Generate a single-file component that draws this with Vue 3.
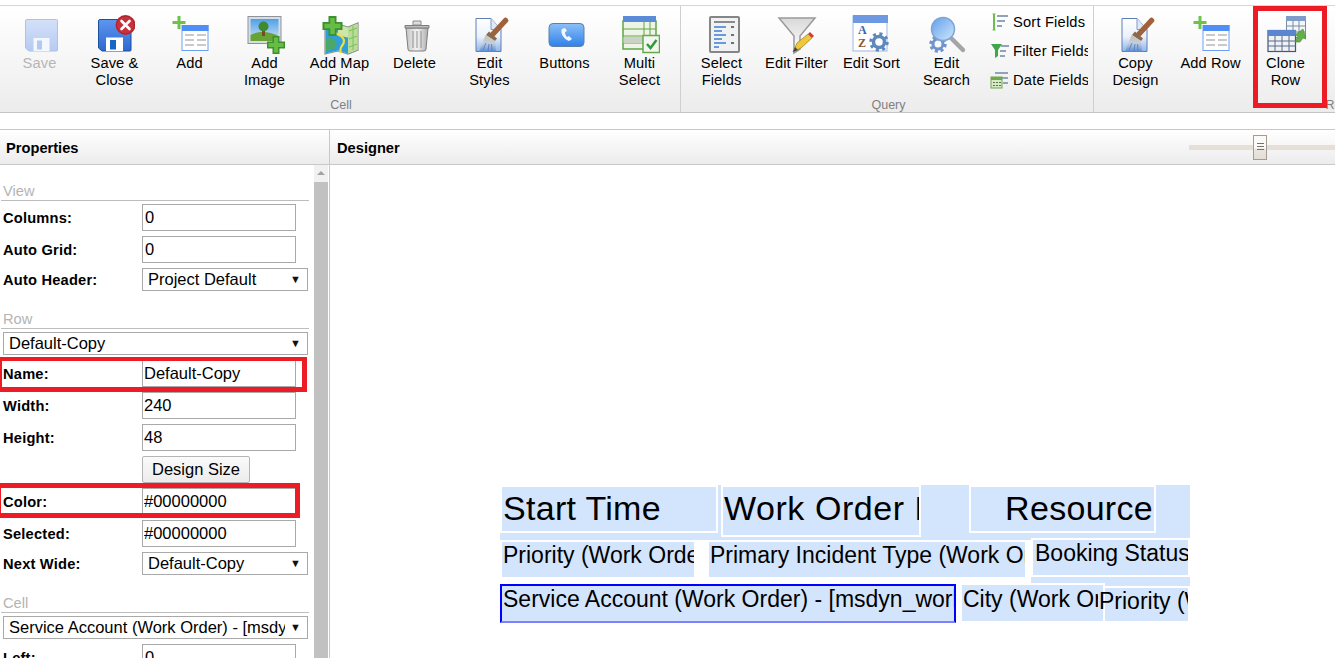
<script setup>
const cellButtons = [
  { icon: 'i-save', label: ['Save'], off: true },
  { icon: 'i-saveclose', label: ['Save &', 'Close'] },
  { icon: 'i-add', label: ['Add'] },
  { icon: 'i-image', label: ['Add', 'Image'] },
  { icon: 'i-map', label: ['Add Map', 'Pin'] },
  { icon: 'i-delete', label: ['Delete'] },
  { icon: 'i-brush', label: ['Edit', 'Styles'] },
  { icon: 'i-buttons', label: ['Buttons'] },
  { icon: 'i-multi', label: ['Multi', 'Select'] }
]
const queryButtons = [
  { icon: 'i-select', label: ['Select', 'Fields'] },
  { icon: 'i-filter', label: ['Edit Filter'] },
  { icon: 'i-sort', label: ['Edit Sort'] },
  { icon: 'i-search', label: ['Edit', 'Search'] }
]
const smallButtons = [
  { icon: 's-sort', label: 'Sort Fields' },
  { icon: 's-filter', label: 'Filter Fields' },
  { icon: 's-date', label: 'Date Fields' }
]
const rowButtons = [
  { icon: 'i-brush', label: ['Copy', 'Design'] },
  { icon: 'i-add', label: ['Add Row'] },
  { icon: 'i-clone', label: ['Clone', 'Row'] }
]

const box = (x, y, w, h) => ({ left: x - 330 + 'px', top: y - 165 + 'px', width: w + 'px', height: h + 'px' })
const strips = [box(500, 485, 690, 55), box(1031, 577, 159, 9)]
const cells = [
  { text: 'Start Time', pos: box(500, 485, 218, 48), cls: 'big' },
  { text: 'Work Order Number', pos: box(721, 485, 200, 52), cls: 'big spaced' },
  { text: 'Resource', pos: box(969, 485, 187, 48), cls: 'big end' },
  { text: 'Priority (Work Order)', pos: box(500, 540, 196, 39), cls: '' },
  { text: 'Primary Incident Type (Work Order)', pos: box(707, 540, 320, 39), cls: '' },
  { text: 'Booking Status (Work Order)', pos: box(1031, 538, 159, 39), cls: 'raised' },
  { text: 'Service Account (Work Order) - [msdyn_workorder]', pos: box(500, 584, 456, 39), cls: 'active' },
  { text: 'City (Work Order)', pos: box(960, 583, 145, 40), cls: 'lowered' },
  { text: 'Priority (Work Order)', pos: box(1098, 588, 92, 35), cls: 'shifted' }
]
</script>

<template>
  <div class="page">
    <svg class="defs" width="0" height="0" aria-hidden="true">
      <defs>
        <linearGradient id="g-pale" x1="0" y1="0" x2="0" y2="1"><stop offset="0" stop-color="#d3e0f8"/><stop offset="1" stop-color="#b6cbf2"/></linearGradient>
        <linearGradient id="g-blue" x1="0" y1="0" x2="0" y2="1"><stop offset="0" stop-color="#5f96ee"/><stop offset="1" stop-color="#2c68cf"/></linearGradient>
        <linearGradient id="g-btn" x1="0" y1="0" x2="0" y2="1"><stop offset="0" stop-color="#8cc0f7"/><stop offset="1" stop-color="#2f80ea"/></linearGradient>
        <linearGradient id="g-page" x1="0" y1="0" x2="0" y2="1"><stop offset="0" stop-color="#ffffff"/><stop offset=".55" stop-color="#eaf1fb"/><stop offset="1" stop-color="#8fb4ea"/></linearGradient>
        <linearGradient id="g-can" x1="0" y1="0" x2="1" y2="0"><stop offset="0" stop-color="#c4c4c4"/><stop offset=".5" stop-color="#f3f3f3"/><stop offset="1" stop-color="#adadad"/></linearGradient>
        <linearGradient id="g-sky" x1="0" y1="0" x2="0" y2="1"><stop offset="0" stop-color="#4f9fe8"/><stop offset="1" stop-color="#cfe6f7"/></linearGradient>
        <linearGradient id="g-lens" x1="0" y1="0" x2="1" y2="1"><stop offset="0" stop-color="#5fa0ea"/><stop offset="1" stop-color="#d2e7fb"/></linearGradient>
        <linearGradient id="g-funnel" x1="0" y1="0" x2="0" y2="1"><stop offset="0" stop-color="#d9d9d9"/><stop offset="1" stop-color="#ffffff"/></linearGradient>
        <linearGradient id="g-bristle" x1="0" y1="0" x2="0" y2="1"><stop offset="0" stop-color="#c8c0b4"/><stop offset=".5" stop-color="#c4cfdb"/><stop offset="1" stop-color="#5c8fdb"/></linearGradient>

        <symbol id="i-save" viewBox="0 0 40 40">
          <path d="M7 4.500h29.500a1 1 0 0 1 1 1V35a1 1 0 0 1-1 1H9l-3.500-3V6a1.500 1.500 0 0 1 1.500-1.500z" fill="url(#g-pale)" stroke="#aac2ee"/>
          <rect x="13.500" y="23" width="16" height="13" fill="#f4f7fd"/>
          <rect x="17" y="25.500" width="5" height="9" fill="#b3c9ef"/>
        </symbol>

        <symbol id="i-saveclose" viewBox="0 0 40 40">
          <path d="M5 4.500h30a1 1 0 0 1 1 1V35a1 1 0 0 1-1 1H7l-3.500-3V6a1.500 1.500 0 0 1 1.500-1.500z" fill="url(#g-blue)" stroke="#1d4f9f"/>
          <rect x="11" y="22.500" width="17" height="13.500" fill="#fff"/>
          <rect x="15" y="25" width="6" height="9.500" fill="#1767c4"/>
          <circle cx="30.500" cy="10" r="10" fill="#c6323b"/>
          <circle cx="30.500" cy="10" r="9" fill="none" stroke="#a5242c"/>
          <path d="M26.500 6l8 8M34.500 6l-8 8" stroke="#fff" stroke-width="2.600" stroke-linecap="round"/>
        </symbol>

        <symbol id="i-add" viewBox="0 0 40 40">
          <path d="M9 1v13M2.500 7.500h13" stroke="#6cc24a" stroke-width="3"/>
          <rect x="12" y="10.500" width="26" height="25" fill="#fff" stroke="#6f9ff0"/>
          <rect x="12" y="10" width="26.500" height="6" fill="#4f8ff5"/>
          <path d="M15 20h9M27 20h9M15 25h9M27 25h9M15 30h9M27 30h9" stroke="#c9c9c9" stroke-width="2"/>
        </symbol>

        <symbol id="i-image" viewBox="0 0 40 40">
          <rect x="3" y="1.500" width="33" height="27" fill="#d8dde3" stroke="#8c939b"/>
          <rect x="5.500" y="4" width="28" height="22" fill="url(#g-sky)"/>
          <path d="M5.500 26v-6c8-4 18-4 28 1v5z" fill="#67a336"/>
          <rect x="17" y="14" width="3" height="7" fill="#7a4a25"/>
          <circle cx="18.500" cy="11.500" r="5" fill="#3f8a2d"/>
          <path d="M31 21v18M22 30h18" stroke="#3e8f2d" stroke-width="7"/>
          <path d="M31 22.500v15M23.500 30h15" stroke="#66bd45" stroke-width="4"/>
        </symbol>

        <symbol id="i-map" viewBox="0 0 40 40">
          <path d="M5 12l13-3 10 3 10-4v27l-10 4-10-3-13 3z" fill="#e8f2c8" stroke="#8a9488" stroke-width="1.200"/>
          <path d="M5.600 12.500l12.400-3 10 3v26l-10-3-12.400 3z" fill="#2f9fdc"/>
          <path d="M28 12.500l9.500-3.800v25.800L28 38.300z" fill="#b9dd96"/>
          <path d="M18 9.500l10 3v10l-10-2z" fill="#cfe6a6"/>
          <path d="M6 24c4-2 8-1 10 3s-1 8-6 8l-4 1z" fill="#49a86a"/>
          <path d="M16 18c3 3 8 3 8 8s-6 6-3 12" fill="none" stroke="#f2df3c" stroke-width="2.200"/>
          <path d="M29 16l8-3M29 24l8-3M29 32l8-3M33 11v24" stroke="#7fbd5e"/>
          <path d="M12.500 1v20M2.500 11h20" stroke="#3e8f2d" stroke-width="8"/>
          <path d="M12.500 3v16M4.500 11h16" stroke="#66bd45" stroke-width="4.500"/>
        </symbol>

        <symbol id="i-delete" viewBox="0 0 40 40">
          <path d="M11 13h22l-2 21a2 2 0 0 1-2 2H15a2 2 0 0 1-2-2z" fill="url(#g-can)" stroke="#7e7e7e"/>
          <path d="M10 10.500h24v2.500H10z" fill="#bdbdbd" stroke="#7b7b7b"/>
          <path d="M18 6h8v4h-8z" fill="#ddd" stroke="#8d8d8d"/>
          <path d="M18 16v17M22 16v17M26 16v17" stroke="#8f8f8f"/>
        </symbol>

        <symbol id="i-brush" viewBox="0 0 40 40">
          <path d="M6 3.500h15l10 11v22H6z" fill="url(#g-page)" stroke="#5f7fb5"/>
          <path d="M21 3.500v11h10" fill="#dfe8f6" stroke="#7f9ac6"/>
          <path d="M35.500 5.500L23 19" stroke="#a0623a" stroke-width="5.500" stroke-linecap="round"/>
          <path d="M19 16.500l8 7-2 2.500-9-6z" fill="#8a6a4f"/>
          <path d="M15.500 20l9.500 6 1 10.500H9z" fill="url(#g-bristle)"/>
          <path d="M13 35l3-7M18 36l1-7M22 36l-.5-7" stroke="#4a78bd" stroke-width=".8"/>
        </symbol>

        <symbol id="i-buttons" viewBox="0 0 40 40">
          <rect x="4" y="8.500" width="35" height="23" rx="4" fill="url(#g-btn)" stroke="#5e80a8"/>
          <path d="M17 14c-2 3 1 10 7 12l3-2-3-3-2 1c-1-1-2-3-2-5l2-1-2-3z" fill="#f1f8ff"/>
        </symbol>

        <symbol id="i-multi" viewBox="0 0 40 40">
          <rect x="3" y="6" width="33" height="28" fill="#eef5e6" stroke="#5fa545" stroke-width="1.500"/>
          <rect x="3" y="1" width="33" height="6" fill="#5b8ad8"/>
          <path d="M3 14h33M3 21h33M3 28h33M24 7v27M30 7v27" stroke="#5fa545"/>
          <rect x="3.500" y="22" width="20" height="6" fill="#c9d2c4"/>
          <rect x="23" y="20.500" width="16.500" height="17" fill="#f3f6f0" stroke="#66a84c" stroke-width="1.500"/>
          <path d="M27 29l3.500 4 6-8" fill="none" stroke="#2f9a3b" stroke-width="2.500"/>
        </symbol>

        <symbol id="i-select" viewBox="0 0 40 40">
          <rect x="8" y="2" width="29" height="35" rx="1" fill="#eff1f3" stroke="#858585" stroke-width="2"/>
          <path d="M12 7h21" stroke="#8b8b8b" stroke-width="2"/>
          <path d="M12 12h12M12 16h8M12 20h12M12 24h8M12 28h12M12 32h5" stroke="#3f7fd0" stroke-width="1.500"/>
          <path d="M29 12h3M29 20h3M29 28h3" stroke="#444" stroke-width="1.500"/>
        </symbol>

        <symbol id="i-filter" viewBox="0 0 40 40">
          <path d="M2 3h36L23 21v13l-6 4V21z" fill="url(#g-funnel)" stroke="#9a9a9a" stroke-width="1.500"/>
          <path d="M16 37l4-9 11-9 4 4-11 10z" fill="#efc93a" stroke="#8f7a24" stroke-width=".7"/>
          <path d="M31 19l2-2 4 4-2 2z" fill="#d23c3c"/>
          <path d="M16 37l2-5 3 3z" fill="#444"/>
        </symbol>

        <symbol id="i-sort" viewBox="0 0 40 40">
          <rect x="1" y="1" width="34" height="35" fill="#fff" stroke="#9db7e3"/>
          <rect x="1" y="0" width="35" height="8" fill="#6f98e2"/>
          <text x="6" y="19" font-family="Liberation Serif, serif" font-weight="700" font-size="12" fill="#3567a8">A</text>
          <text x="6" y="32" font-family="Liberation Serif, serif" font-weight="700" font-size="12" fill="#8a5a35">Z</text>
          <circle cx="27" cy="27" r="8" fill="none" stroke="#5f88bd" stroke-width="3.500" stroke-dasharray="3 3.300"/>
          <circle cx="27" cy="27" r="5.500" fill="none" stroke="#5f88bd" stroke-width="3.500"/>
        </symbol>

        <symbol id="i-search" viewBox="0 0 40 40">
          <path d="M24 23l12 12" stroke="#a5a5a5" stroke-width="4.500" stroke-linecap="round"/>
          <circle cx="11" cy="29" r="7" fill="none" stroke="#6f93cf" stroke-width="3.500" stroke-dasharray="3 2.500"/>
          <circle cx="11" cy="29" r="5" fill="none" stroke="#6f93cf" stroke-width="3"/>
          <circle cx="16" cy="14" r="11.500" fill="url(#g-lens)" stroke="#7ea3d8" stroke-width="1.500"/>
        </symbol>

        <symbol id="i-clone" viewBox="0 0 40 40">
          <rect x="20.500" y="1.500" width="19" height="21" fill="#f4f6f9" stroke="#7a8ba3"/>
          <rect x="20" y="1" width="20" height="5" fill="#7f9cc9"/>
          <path d="M20.500 11h19M20.500 17h19M27 6v17M33 6v17" stroke="#7a8ba3"/>
          <rect x="2" y="15.500" width="27.500" height="21" fill="#eef1f5" stroke="#45556e" stroke-width="1.200"/>
          <rect x="2" y="15" width="28" height="6" fill="#5b86cf"/>
          <path d="M2 26h28M2 31h28M9 21v16M16 21v16M23 21v16" stroke="#5a6b85"/>
          <path d="M29 27l3-6-3-1 8-6 3 10-3-1-3 4z" fill="#62b144" stroke="#3f8a2d" stroke-width=".6"/>
        </symbol>

        <symbol id="s-sort" viewBox="0 0 20 20">
          <path d="M4 2v16" stroke="#6cc04a" stroke-width="2"/>
          <path d="M2.500 2h3M2.500 18h3" stroke="#6cc04a"/>
          <path d="M7 4h11M7 9h8M7 14h5" stroke="#8fa3bd" stroke-width="2"/>
        </symbol>
        <symbol id="s-filter" viewBox="0 0 20 20">
          <path d="M1 3h11L8 9v6l-3 2V9z" fill="#3fa64a"/>
          <path d="M11 5h8M10 10h6M10 15h5" stroke="#8fa3bd" stroke-width="2"/>
        </symbol>
        <symbol id="s-date" viewBox="0 0 20 20">
          <path d="M5 3h13M12 8h6M13 13h5" stroke="#8fa3bd" stroke-width="2"/>
          <rect x="1" y="7" width="11" height="11" fill="#d9e8c8" stroke="#6fa84f"/>
          <rect x="1" y="7" width="11" height="3" fill="#6fa84f"/>
          <path d="M3 12.500h2M6 12.500h2M9 12.500h2M3 15.500h2M6 15.500h2M9 15.500h2" stroke="#4f7f38"/>
        </symbol>
      </defs>
    </svg>

    <header class="ribbon">
      <section class="group group-cell">
        <div class="tools">
          <button v-for="b in cellButtons" :key="b.icon" class="tool" :class="{ off: b.off }">
            <svg class="icon"><use :href="'#' + b.icon"/></svg>
            <span v-for="l in b.label" :key="l" class="line">{{ l }}</span>
          </button>
        </div>
        <div class="group-name">Cell</div>
      </section>
      <section class="group group-query">
        <div class="tools">
          <button v-for="b in queryButtons" :key="b.icon" class="tool">
            <svg class="icon"><use :href="'#' + b.icon"/></svg>
            <span v-for="l in b.label" :key="l" class="line">{{ l }}</span>
          </button>
          <div class="small-tools">
            <div v-for="s in smallButtons" :key="s.icon" class="small-tool">
              <svg class="small-icon"><use :href="'#' + s.icon"/></svg>
              <span>{{ s.label }}</span>
            </div>
          </div>
        </div>
        <div class="group-name">Query</div>
      </section>
      <section class="group group-row">
        <div class="tools">
          <button v-for="b in rowButtons" :key="b.icon" class="tool">
            <svg class="icon"><use :href="'#' + b.icon"/></svg>
            <span v-for="l in b.label" :key="l" class="line">{{ l }}</span>
          </button>
        </div>
        <div class="group-name">Row</div>
      </section>
    </header>

    <div class="workspace">
      <aside class="props">
        <div class="pane-head">Properties</div>
        <div class="props-body">
          <div class="form">
            <h3 class="section first">View</h3>
            <div class="row"><label>Columns:</label><input readonly value="0"></div>
            <div class="row"><label>Auto Grid:</label><input readonly value="0"></div>
            <div class="row"><label>Auto Header:</label>
              <div class="pick"><select><option>Project Default</option></select><i>▼</i></div>
            </div>

            <h3 class="section">Row</h3>
            <div class="row"><div class="pick wide"><select><option>Default-Copy</option></select><i>▼</i></div></div>
            <div class="row"><label>Name:</label><input readonly value="Default-Copy" class="tight"></div>
            <div class="row"><label>Width:</label><input readonly value="240" class="tight"></div>
            <div class="row"><label>Height:</label><input readonly value="48" class="tight"></div>
            <div class="row"><label></label><button class="design">Design Size</button></div>
            <div class="row"><label>Color:</label><input readonly value="#00000000" class="tight"></div>
            <div class="row"><label>Selected:</label><input readonly value="#00000000" class="tight"></div>
            <div class="row"><label>Next Wide:</label>
              <div class="pick"><select><option>Default-Copy</option></select><i>▼</i></div>
            </div>

            <h3 class="section">Cell</h3>
            <div class="row"><div class="pick wide"><select><option>Service Account (Work Order) - [msdyn_workorder]</option></select><i>▼</i></div></div>
            <div class="row"><label>Left:</label><input readonly value="0"></div>
          </div>
          <div class="scrollbar"><span class="up"></span><span class="thumb"></span></div>
        </div>
      </aside>

      <main class="designer">
        <div class="pane-head designer-head">
          <span>Designer</span>
          <div class="slider"><span class="knob"><b></b><b></b><b></b></span></div>
        </div>
        <div class="canvas">
          <div v-for="(s, i) in strips" :key="i" class="strip" :style="s"></div>
          <div v-for="c in cells" :key="c.text + c.pos.left" class="cell" :class="c.cls" :style="c.pos">{{ c.text }}</div>
        </div>
      </main>
    </div>

    <div class="mark mark-clone"></div>
    <div class="mark mark-name"></div>
    <div class="mark mark-color"></div>
  </div>
</template>

<style>
html, body { margin: 0; overflow: hidden; background: #fff; }
</style>

<style scoped>
.page {
  position: relative;
  width: 1335px;
  height: 658px;
  overflow: hidden;
  background: #fff;
  color: #000;
  font-family: "Liberation Sans", Arial, sans-serif;
  display: flex;
  flex-direction: column;
}
.defs { position: absolute; }
.ribbon {
  margin-top: 5px;
  height: 106px;
  flex: none;
  display: flex;
  border-top: 1px solid #d6d6d6;
  border-bottom: 1px solid #c4c4c4;
  background: linear-gradient(#fff 0%, #f8f8f8 40%, #ececec 100%);
}
.group {
  display: flex;
  flex-direction: column;
  flex: none;
  box-sizing: border-box;
  border-right: 1px solid #cfcfcf;
}
.group-cell { width: 681px; padding-left: 2px; }
.group-query { width: 413px; padding-left: 3px; }
.group-row { width: 484px; padding-left: 4px; border-right: 0; }
.tools { display: flex; align-items: flex-start; height: 91px; }
.group-name {
  height: 15px;
  line-height: 16px;
  text-align: center;
  font-size: 12.5px;
  color: #808080;
}
.tool {
  width: 75px;
  flex: none;
  padding: 9px 0 0;
  margin: 0;
  border: 0;
  background: none;
  font: inherit;
  color: #000;
  display: flex;
  flex-direction: column;
  align-items: center;
}
.tool.off { color: #b5b5b5; }
.icon { width: 40px; height: 40px; display: block; flex: none; margin-bottom: -1px; }
.line { font-size: 14.67px; line-height: 17.5px; letter-spacing: .1px; white-space: nowrap; position: relative; top: .5px; }
.small-tools { margin-left: 6px; width: 98px; overflow: hidden; padding-top: 1px; }
.small-tool {
  height: 29px;
  display: flex;
  align-items: center;
  gap: 3px;
  font-size: 14.67px;
  letter-spacing: .2px;
  white-space: nowrap;
}
.small-icon { width: 20px; height: 20px; flex: none; }

.workspace {
  margin-top: 16px;
  flex: 1;
  min-height: 0;
  display: flex;
}
.pane-head {
  height: 34px;
  flex: none;
  box-sizing: content-box;
  line-height: 36px;
  font-size: 14.67px;
  font-weight: 700;
  padding-left: 6px;
  border-top: 1px solid #c8c8c8;
  border-bottom: 1px solid #c8c8c8;
  background: linear-gradient(#fff, #ececec);
}
.props {
  width: 329px;
  flex: none;
  border-right: 1px solid #c8c8c8;
  display: flex;
  flex-direction: column;
}
.props-body { flex: 1; min-height: 0; display: flex; overflow: hidden; }
.form { width: 309px; flex: none; padding-left: 3px; margin-right: 5px; box-sizing: border-box; }
.section {
  margin: 20px 0 3px -2px;
  height: 17px;
  line-height: 17px;
  padding-left: 2px;
  font-size: 14.67px;
  font-weight: 400;
  color: #b4b4b4;
  border-bottom: 1px solid #bdbdbd;
  box-sizing: content-box;
}
.section.first { margin-top: 18px; }
.row {
  display: flex;
  align-items: center;
  margin-bottom: 5px;
}
.row label {
  width: 139px;
  flex: none;
  font-size: 14.67px;
  font-weight: 700;
  letter-spacing: .2px;
}
.row input {
  width: 154px;
  height: 27px;
  box-sizing: border-box;
  border: 1px solid #a9a9a9;
  padding: 0 2px 0 2px;
  margin: 0;
  font: inherit;
  font-size: 16.5px;
  color: #000;
  background: #fff;
  outline: 0;
}
.row input.tight { padding-left: 1px; }
.pick {
  position: relative;
  width: 166px;
  height: 23px;
}
.pick.wide { width: 305px; }
.pick select {
  appearance: none;
  width: 100%;
  height: 100%;
  box-sizing: border-box;
  border: 1px solid #a9a9a9;
  border-radius: 0;
  padding: 0 22px 1px 5px;
  margin: 0;
  font: inherit;
  font-size: 16.5px;
  color: #000;
  background: #fff;
}
.pick i {
  position: absolute;
  right: 7px;
  top: 4px;
  font-style: normal;
  font-size: 11px;
  line-height: 14px;
  color: #111;
}
.design {
  width: 108px;
  height: 27px;
  box-sizing: border-box;
  border: 1px solid #b5b5b5;
  border-radius: 2px;
  background: linear-gradient(#fafafa, #ececec);
  padding: 0;
  font: inherit;
  font-size: 16.5px;
  color: #000;
}
.scrollbar {
  width: 14px;
  flex: none;
  background: #f1f1f1;
  display: flex;
  flex-direction: column;
  align-items: center;
}
.up {
  margin-top: 6px;
  width: 0;
  height: 0;
  border-left: 4px solid transparent;
  border-right: 4px solid transparent;
  border-bottom: 4px solid #a3a3a3;
  flex: none;
}
.thumb { margin-top: 7px; width: 100%; flex: 1; background: #c1c1c1; }

.designer { flex: 1; min-width: 0; display: flex; flex-direction: column; }
.designer-head { display: flex; justify-content: space-between; align-items: center; padding-left: 7px; height: 33px; padding-top: 1px; }
.slider {
  width: 146px;
  height: 5px;
  background: #e6dfd8;
  position: relative;
}
.knob {
  position: absolute;
  left: 64px;
  top: -10px;
  width: 14px;
  height: 25px;
  box-sizing: border-box;
  border: 1px solid #a49c92;
  background: linear-gradient(#fbfaf8 50%, #e9e4dd 60%, #e4ded6);
  display: flex;
  flex-direction: column;
  justify-content: flex-start;
  padding-top: 7px;
  align-items: center;
  gap: 2px;
}
.knob b { display: block; width: 7px; height: 1px; background: #77716b; }
.canvas { position: relative; flex: 1; background: #fff; overflow: hidden; }
.strip { position: absolute; background: #d3e5fd; }
.cell {
  position: absolute;
  box-sizing: border-box;
  border: 2px solid #fff;
  background: #d3e5fd;
  overflow: hidden;
  white-space: nowrap;
  padding-left: 1px;
  font-size: 23px;
  line-height: 26px;
  color: #000;
}
.cell.big { font-size: 34px; line-height: 42px; letter-spacing: .3px; }
.cell.big.spaced { letter-spacing: .55px; }
.cell.end { text-align: right; padding-right: 1px; }
.cell.raised { padding-left: 2px; }
.cell.lowered { padding-top: 1px; }
.cell.active {
  border-color: #0000ff;
  border-bottom-color: #8080ff;
}
.cell.shifted {
  border-left: 0;
  border-top: 0;
  padding-left: 1px;
  background: linear-gradient(90deg, #d3e5fd 5px, #fff 5px, #fff 7px, #d3e5fd 7px);
}
.mark {
  position: absolute;
  box-sizing: border-box;
  border: 5px solid #ed1c24;
}
.mark-clone { left: 1253px; top: 6px; width: 74px; height: 102px; }
.mark-name { left: -3px; top: 357px; width: 310px; height: 35px; border-width: 4px 5px 5px; }
.mark-color { left: -4px; top: 483px; width: 304px; height: 35px; }
</style>
